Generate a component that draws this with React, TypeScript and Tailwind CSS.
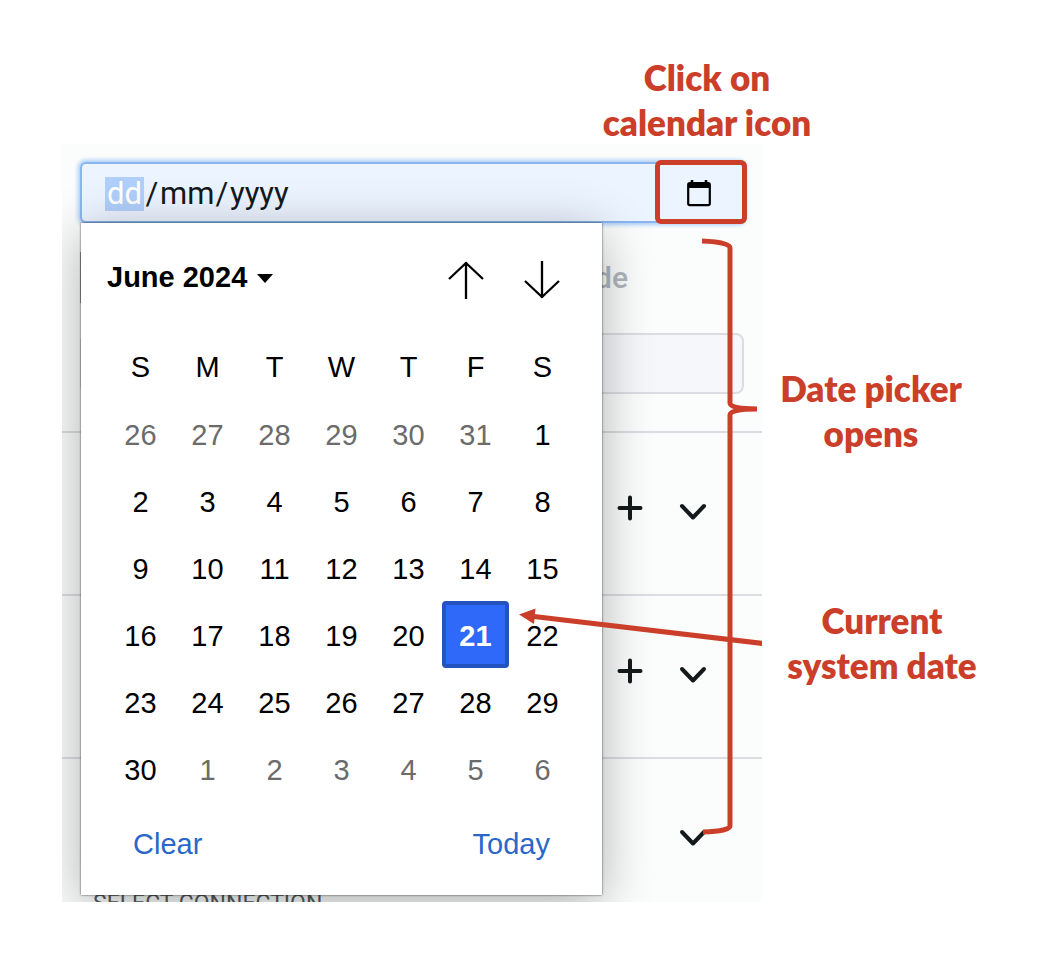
import React from "react";

const weekdays = ["S", "M", "T", "W", "T", "F", "S"];

const weeks = [
  [26, 27, 28, 29, 30, 31, 1],
  [2, 3, 4, 5, 6, 7, 8],
  [9, 10, 11, 12, 13, 14, 15],
  [16, 17, 18, 19, 20, 21, 22],
  [23, 24, 25, 26, 27, 28, 29],
  [30, 1, 2, 3, 4, 5, 6],
];

function dayClass(week: number, day: number) {
  if (week === 3 && day === 21) {
    return "size-full pt-1 rounded-sm border-4 border-[#2453be] bg-[#2f69fa] font-bold text-white";
  }
  const outside = (week === 0 && day > 20) || (week === 5 && day < 20);
  return outside ? "size-full pt-1 text-[#6b6b6b]" : "size-full pt-1 text-black";
}

function CalendarIcon() {
  return (
    <svg width="26" height="28" viewBox="0 0 26 28" aria-hidden="true">
      <path d="M6 1v4M20 1v4" stroke="#000" strokeWidth="2.6" />
      <rect x="2.2" y="4.2" width="21.6" height="22" rx="1.6" fill="none" stroke="#000" strokeWidth="2.2" />
      <path d="M2 4h22v5H2z" fill="#000" />
    </svg>
  );
}

function ArrowIcon({ down = false }: { down?: boolean }) {
  return (
    <svg width="36" height="38" viewBox="0 0 36 38" fill="none" stroke="#000" strokeWidth="2.3" aria-hidden="true">
      <path d={down ? "M18 0v37M1 20l17 16 17-16" : "M18 38V1M1 18L18 2l17 16"} />
    </svg>
  );
}

function PlusIcon() {
  return (
    <svg width="26" height="26" viewBox="0 0 26 26" stroke="#14191c" strokeWidth="4" strokeLinecap="round" aria-hidden="true">
      <path d="M13 2.5v21M2.5 13h21" />
    </svg>
  );
}

function ChevronIcon() {
  return (
    <svg width="28" height="18" viewBox="0 0 28 18" fill="none" stroke="#14191c" strokeWidth="4" strokeLinecap="round" strokeLinejoin="round" aria-hidden="true">
      <path d="M3 3l11 11.5L25 3" />
    </svg>
  );
}

function Section({ addable = false }: { addable?: boolean }) {
  return (
    <section className="flex h-[163px] items-center justify-end gap-9 border-t-2 border-[#dcdde2] pr-[55px] pb-3">
      {addable && (
        <button type="button" aria-label="Add">
          <PlusIcon />
        </button>
      )}
      <button type="button" aria-label="Expand" className="pt-2">
        <ChevronIcon />
      </button>
    </section>
  );
}

function DateField() {
  const part = "bg-transparent p-0 outline-none placeholder:text-[#14191c] placeholder:opacity-100";
  return (
    <div className="relative flex h-[61px] items-center rounded-md border-2 border-[#8ab6ee] bg-[#ecf4ff] pt-0.5 pl-[23px] text-[31px] leading-[34px] text-[#14191c] shadow-[0_0_4px_2px_#a9cbf7]">
      <input aria-label="Day" placeholder="dd" className="w-[39px] bg-[#b0cffa] p-0 text-center outline-none placeholder:text-white placeholder:opacity-100" />
      <span className="w-4 text-center">/</span>
      <input aria-label="Month" placeholder="mm" className={`w-[54px] text-center ${part}`} />
      <span className="w-4 text-center">/</span>
      <input aria-label="Year" placeholder="yyyy" className={`w-20 ${part}`} />
      <button
        type="button"
        aria-label="Open calendar"
        className="absolute -top-1 -right-[5px] flex h-16 w-[92px] items-center justify-center rounded-md border-[5px] border-[#cb3f2a] pt-0.5 pr-1"
      >
        <CalendarIcon />
      </button>
    </div>
  );
}

function DatePicker() {
  return (
    <div
      role="dialog"
      aria-label="Choose date"
      className="absolute top-[79px] left-[19px] w-[521px] bg-white px-[26px] font-['Liberation_Sans',Arial,sans-serif] text-[29px] shadow-[0_0_2px_rgba(0,0,0,0.7),0_10px_48px_rgba(0,0,0,0.3)]"
    >
      <div className="flex h-[110px] items-center justify-between pr-4">
        <button type="button" className="flex items-center gap-2.5 font-bold">
          June 2024
          <svg width="16" height="9" viewBox="0 0 16 9" aria-hidden="true">
            <path d="M0 0h16L8 9z" />
          </svg>
        </button>
        <div className="flex gap-10 pt-1">
          <button type="button" aria-label="Previous month">
            <ArrowIcon />
          </button>
          <button type="button" aria-label="Next month">
            <ArrowIcon down />
          </button>
        </div>
      </div>
      <table className="w-full table-fixed border-collapse text-center">
        <thead>
          <tr className="h-[67px]">
            {weekdays.map((name, i) => (
              <th key={i} className="p-0 pt-0.5 font-normal">{name}</th>
            ))}
          </tr>
        </thead>
        <tbody>
          {weeks.map((week, w) => (
            <tr key={w}>
              {week.map((day) => (
                <td key={day} className="h-[67px] p-0">
                  <button type="button" className={dayClass(w, day)}>{day}</button>
                </td>
              ))}
            </tr>
          ))}
        </tbody>
      </table>
      <div className="flex h-[93px] justify-between px-[26px] pb-2 text-[#2a67c9]">
        <button type="button">Clear</button>
        <button type="button">Today</button>
      </div>
    </div>
  );
}

function Callout({ lines, className }: { lines: string[]; className: string }) {
  return (
    <p className={`text-center font-['Lato',sans-serif] text-[35px] leading-[45px] font-extrabold text-[#cb3f2a] ${className}`}>
      {lines.map((line) => (
        <span key={line} className="block whitespace-nowrap">{line}</span>
      ))}
    </p>
  );
}

export default function App() {
  return (
    <main className="min-h-screen bg-white pt-[55px] pb-16 pl-[62px]">
      <Callout lines={["Click on", "calendar icon"]} className="ml-[535px] h-[89px] w-[220px]" />
      <div className="flex items-start">
        <div className="relative h-[758px] max-w-[700px] flex-1 overflow-hidden bg-[#fbfdfc] font-['Roboto',sans-serif]">
          <div className="px-[18px] pt-[18px]">
            <DateField />
            <div className="mt-[29px] h-[51px] border-l-2 border-[#9a9da5] pl-[513px]">
              <label htmlFor="detail" className="text-[30px] leading-[51px] font-medium text-[#b1b6bf]">de</label>
            </div>
            <input id="detail" disabled className="mt-[30px] block h-[61px] w-full rounded-lg border-2 border-[#dcdde2] bg-[#f6f7fb]" />
          </div>
          <div className="mt-[37px]">
            <Section addable />
            <Section addable />
            <Section />
          </div>
          <h2 className="-mt-8 pl-[31px] text-[23px] leading-8 text-[#555b5e]">SELECT CONNECTION</h2>
          <DatePicker />
          <svg width="700" height="758" viewBox="62 144 700 758" className="pointer-events-none absolute top-0 left-0" fill="none" stroke="#cb3f2a" strokeWidth="5" aria-hidden="true">
            <path d="M702 241Q730 242 730 248V403Q730 409 757 409Q730 409 730 415V826Q730 831 703 832" />
            <path d="M763 643.5L534 616.5" />
            <path d="M519 614.5L535.5 608.5L534 624Z" fill="#cb3f2a" stroke="none" />
          </svg>
        </div>
        <aside className="flex w-[280px] flex-col gap-[142px] pt-[222px]">
          <Callout lines={["Date picker", "opens"]} className="w-[218px]" />
          <Callout lines={["Current", "system date"]} className="w-[240px]" />
        </aside>
      </div>
    </main>
  );
}
